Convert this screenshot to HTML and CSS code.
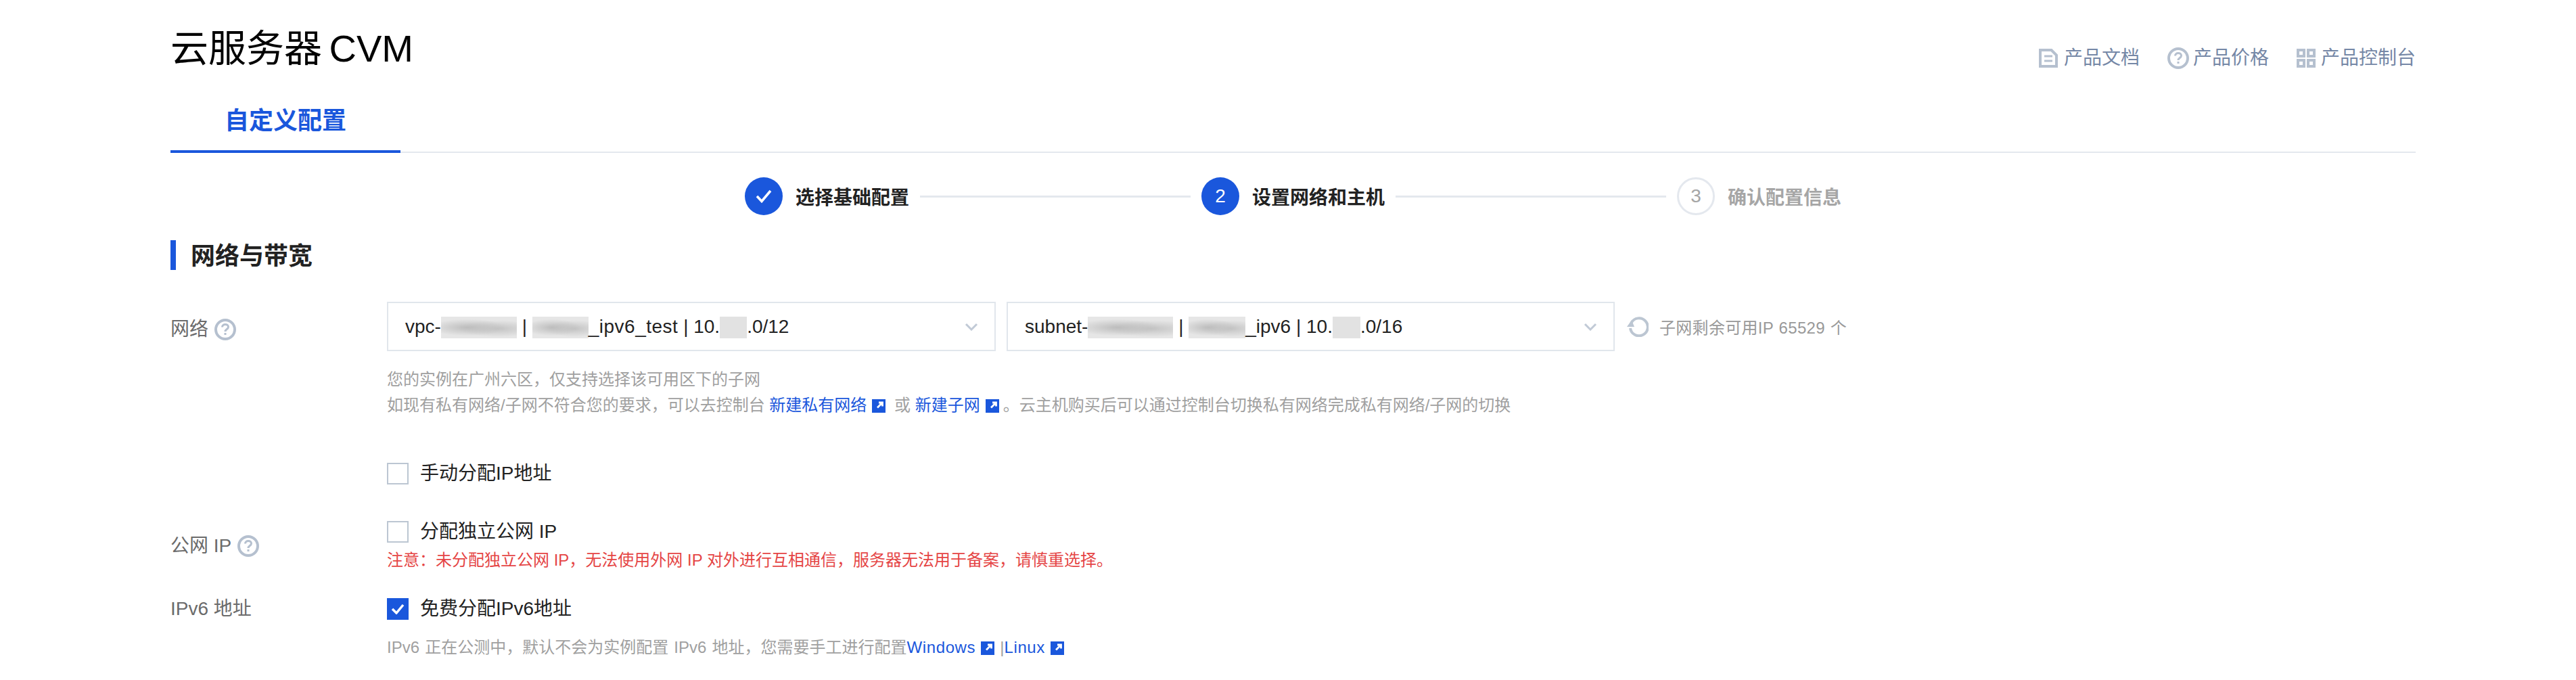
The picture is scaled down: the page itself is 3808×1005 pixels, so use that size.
FILE: index.html
```html
<!DOCTYPE html>
<html lang="zh-CN">
<head>
<meta charset="utf-8">
<title>云服务器 CVM</title>
<link rel="stylesheet" href="styles.css">
</head>
<body>
<main class="page">
  <header class="header">
    <h1 class="title">云服务器 CVM</h1>
    <nav class="top-links">
      <a class="top-link">
        <svg class="icon-doc" viewBox="0 0 28 28"><path d="M2 2H18.500L26 9.500V26H2Z" fill="none" stroke="#b5c0cf" stroke-width="4"/><path d="M8 11H20M8 18H20" stroke="#b5c0cf" stroke-width="3"/></svg>
        <span>产品文档</span>
      </a>
      <a class="top-link">
        <svg class="icon-help" viewBox="0 0 32 32"><use href="#help"/></svg>
        <span>产品价格</span>
      </a>
      <a class="top-link">
        <svg class="icon-grid" viewBox="0 0 28 28"><path d="M2 2H11V11H2ZM17 2H26V11H17ZM2 17H11V26H2ZM17 17H26V26H17Z" fill="none" stroke="#b5c0cf" stroke-width="4"/></svg>
        <span>产品控制台</span>
      </a>
    </nav>
  </header>

  <div class="tabs"><div class="tab">自定义配置</div></div>

  <ol class="steps">
    <li class="step">
      <span class="step-dot"><svg class="step-check" viewBox="0 0 24 20"><path d="M2 10L9 17.500L22 2" fill="none" stroke="#fff" stroke-width="3.600"/></svg></span>
      <span class="step-text">选择基础配置</span>
    </li>
    <li class="step-line"></li>
    <li class="step">
      <span class="step-dot">2</span>
      <span class="step-text">设置网络和主机</span>
    </li>
    <li class="step-line"></li>
    <li class="step step-todo">
      <span class="step-dot">3</span>
      <span class="step-text">确认配置信息</span>
    </li>
  </ol>

  <h2 class="section-title">网络与带宽</h2>

  <div class="row row-network">
    <div class="label label-network">网络
      <svg class="icon-help" viewBox="0 0 32 32"><use href="#help"/></svg>
    </div>
    <div class="control">
      <div class="select-row">
        <div class="select">
          <span class="select-text">vpc-<span class="redact r-a"></span> | <span class="redact r-b"></span><span class="tracked">_ipv6_test</span> | 10.<span class="redact r-c"></span>.0/12</span>
          <svg class="chevron" viewBox="0 0 20 12"><path d="M2 2L10 10L18 2" fill="none" stroke="#c1cad6" stroke-width="3"/></svg>
        </div>
        <div class="select">
          <span class="select-text">subnet-<span class="redact r-d"></span> | <span class="redact r-e"></span>_ipv6 | 10.<span class="redact r-f"></span>.0/16</span>
          <svg class="chevron" viewBox="0 0 20 12"><path d="M2 2L10 10L18 2" fill="none" stroke="#c1cad6" stroke-width="3"/></svg>
        </div>
        <svg class="icon-refresh" viewBox="0 0 32 30"><path d="M6.500 9A13 13 0 1 1 5 17" fill="none" stroke="#bcc6d2" stroke-width="4"/><path d="M0 15L11 15L7 5Z" fill="#bcc6d2"/></svg>
        <span class="subnet-count">子网剩余可用IP 65529 个</span>
      </div>
      <p class="hint hint-network">您的实例在广州六区&#xFF0C;仅支持选择该可用区下的子网<br>如现有私有网络/子网不符合您的要求&#xFF0C;可以去控制台 <a class="link">新建私有网络<svg class="icon-ext" viewBox="0 0 20 20"><use href="#ext"/></svg></a> 或 <a class="link">新建子网<svg class="icon-ext" viewBox="0 0 20 20"><use href="#ext"/></svg></a>。云主机购买后可以通过控制台切换私有网络完成私有网络/子网的切换</p>
    </div>
  </div>

  <div class="row row-manual">
    <div class="label"></div>
    <label class="check"><span class="box"></span>手动分配IP地址</label>
  </div>

  <div class="row row-public">
    <div class="label label-public">公网 IP
      <svg class="icon-help" viewBox="0 0 32 32"><use href="#help"/></svg>
    </div>
    <div class="control">
      <label class="check"><span class="box"></span>分配独立公网 IP</label>
      <p class="warn">注意&#xFF1A;未分配独立公网 IP&#xFF0C;无法使用外网 IP 对外进行互相通信&#xFF0C;服务器无法用于备案&#xFF0C;请慎重选择。</p>
    </div>
  </div>

  <div class="row row-ipv6">
    <div class="label">IPv6 地址</div>
    <div class="control">
      <label class="check"><span class="box box-on"><svg class="box-check" viewBox="0 0 20 16"><path d="M2 8L8 14L18 2" fill="none" stroke="#fff" stroke-width="3.500"/></svg></span>免费分配IPv6地址</label>
      <p class="hint hint-ipv6">IPv6 正在公测中&#xFF0C;默认不会为实例配置 IPv6 地址&#xFF0C;您需要手工进行配置<a class="link">Windows<svg class="icon-ext" viewBox="0 0 20 20"><use href="#ext"/></svg></a> |<a class="link">Linux<svg class="icon-ext" viewBox="0 0 20 20"><use href="#ext"/></svg></a></p>
    </div>
  </div>
</main>

<svg class="defs" aria-hidden="true"><defs>
  <g id="ext"><rect width="20" height="20" fill="#1a57dc"/><path d="M10 5H15.500V10.500M15 5.500L8 12.500" fill="none" stroke="#fff" stroke-width="2.800"/></g>
  <g id="help"><circle cx="16" cy="16" r="14" fill="none" stroke="#b5c0cf" stroke-width="4"/><path d="M11.500 12.500C11.500 10 13.500 8.500 16 8.500C18.500 8.500 20.500 10 20.500 12.300C20.500 15.500 16 15.500 16 19" fill="none" stroke="#b5c0cf" stroke-width="3"/><rect x="14.500" y="21" width="3" height="3" fill="#b5c0cf"/></g>
</defs></svg>
</body>
</html>
```

FILE: styles.css
```css
* { box-sizing: border-box; }
html, body { margin: 0; padding: 0; background: #fff; }
body {
  font-family: "Liberation Sans", "Noto Sans CJK SC", sans-serif;
  font-size: 28px;
  color: #222;
}
.page { width: 3319px; margin-left: 252px; }
.defs { width: 0; height: 0; display: block; overflow: hidden; }

.header { display: flex; justify-content: space-between; align-items: flex-start; height: 128px; padding-top: 32px; }
.title { margin: 0; font-size: 56px; line-height: 80px; font-weight: 400; color: #000; word-spacing: -5px; }
.top-links { display: flex; margin-top: 38px; gap: 41px; }
.top-link { display: flex; align-items: center; height: 32px; color: #7587a6; line-height: 32px; }
.top-link span { display: block; margin-left: 9px; }
.icon-doc, .icon-grid { width: 28px; height: 28px; }
.icon-help { width: 32px; height: 32px; flex: none; }
.top-link:nth-child(2) span { margin-left: 6px; }
.top-link:nth-child(3) span { margin-left: 8px; }

.tabs { border-bottom: 2px solid #e4e8ee; height: 98px; }
.tab {
  width: 340px; height: 98px; padding-top: 4px; line-height: 94px; text-align: center;
  font-size: 36px; font-weight: 700; color: #1a57dc;
  border-bottom: 4px solid #1a57dc;
}

.steps { display: flex; justify-content: center; align-items: center; list-style: none; margin: 36px 0 0; padding: 0; }
.step { display: flex; align-items: center; gap: 19px; font-weight: 700; color: #222; }
.step-dot {
  width: 56px; height: 56px; border-radius: 50%; background: #1a57dc; color: #fff;
  display: flex; align-items: center; justify-content: center; font-weight: 400; font-size: 28px;
}
.step-check { width: 24px; height: 20px; }
.step-line { width: 400px; height: 3px; background: #e4e8ee; margin: 0 16px; }
.step-todo { color: #a6a6a6; }
.step-todo .step-dot { background: #fff; border: 3px solid #e4e8ee; color: #a6a6a6; }

.section-title {
  margin: 37px 0 0; height: 44px; line-height: 48px; padding-left: 22px;
  border-left: 8px solid #1a57dc; font-size: 36px; font-weight: 700; color: #222;
}

.row { display: grid; grid-template-columns: 320px 1fr; }
.label { color: #6b6b6b; line-height: 32px; display: flex; align-items: center; gap: 9px; height: 32px; }
.label-network { margin-top: 25px; }
.label-public { margin-top: 21px; }
.row-network { margin-top: 47px; }
.row-manual { margin-top: 66px; }
.row-public { margin-top: 54px; }
.row-ipv6 { margin-top: 37px; }

.select-row { display: flex; align-items: center; }
.select {
  width: 900px; height: 73px; border: 2px solid #e1e6ec; margin-right: 16px;
  display: flex; align-items: center; justify-content: space-between; padding: 0 24px 0 25px;
  color: #222;
}
.select:nth-child(2) { width: 899px; margin-right: 18px; }
.select-text { white-space: pre; line-height: 36px; }
.tracked { letter-spacing: .5px; }
.chevron { width: 20px; height: 12px; flex: none; }
.redact {
  display: inline-block; height: 32px; vertical-align: -8px;
  background:
    radial-gradient(ellipse at 35% 50%, #bdbdbd 0, rgba(189,189,189,0) 55%),
    radial-gradient(ellipse at 75% 55%, #c4c4c4 0, rgba(196,196,196,0) 50%),
    #e6e6e6;
}
.r-a { width: 112px; }
.r-b { width: 83px; }
.r-c { width: 40px; background: #e2e2e2; }
.r-d { width: 126px; }
.r-e { width: 84px; }
.r-f { width: 41px; background: #e2e2e2; }
.icon-refresh { width: 32px; height: 30px; flex: none; }
.subnet-count { margin-left: 16px; font-size: 24px; color: #999; white-space: nowrap; letter-spacing: .3px; word-spacing: 1px; }

.hint { margin: 0; font-size: 24px; line-height: 38px; color: #a0a0a0; }
.hint-network { margin-top: 23px; }
.hint-network .icon-ext { margin-right: 6px; }
.hint-ipv6 { margin-top: 22px; word-spacing: 1.5px; }
.hint-ipv6 .link { letter-spacing: .6px; }
.link { color: #1a57dc; }
.icon-ext { width: 20px; height: 20px; margin-left: 8px; vertical-align: -3px; }

.check { display: flex; align-items: center; gap: 17px; height: 32px; line-height: 32px; color: #222; }
.box { width: 32px; height: 32px; border: 2px solid #bcc6d2; flex: none; background: #fff; display: flex; align-items: center; justify-content: center; }
.box-on { border-color: #1a57dc; background: #1a57dc; }
.box-check { width: 20px; height: 16px; }
.warn { margin: 7px 0 0; font-size: 24px; line-height: 38px; color: #e54545; }
```
